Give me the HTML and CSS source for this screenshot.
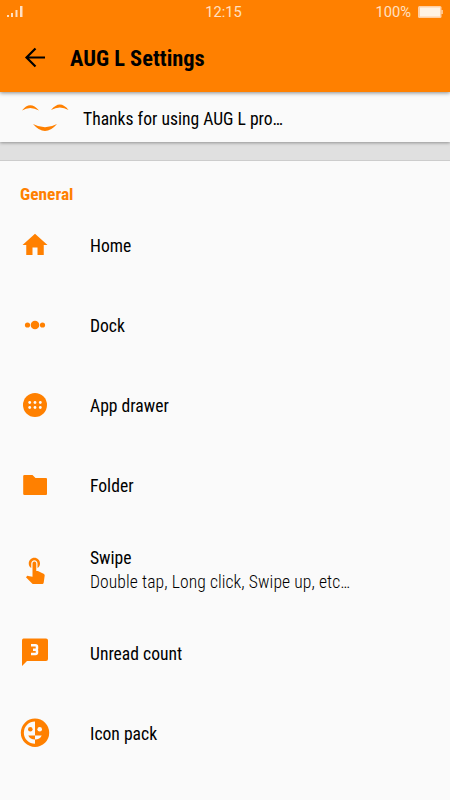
FILE: index.html
```html
<!DOCTYPE html>
<html lang="en">
<head>
    <meta charset="UTF-8">
    <meta name="viewport" content="width=device-width, initial-scale=1.0">
    <title>AUG L Settings</title>
    <link rel="stylesheet" href="styles.css">
</head>
<body>
    <header class="header">
        <div class="status-bar">
            <svg class="signal" width="18" height="13" viewBox="0 0 18 13">
                <path d="M1 10h2v2H1zM5 8h2v4H5zM9.500 5h2v7h-2zM14 1h2.500v11H14z"/>
            </svg>
            <span class="clock">12:15</span>
            <div class="battery">
                <span>100%</span>
                <svg width="25" height="12" viewBox="0 0 25 12">
                    <rect x="0" y="0" width="23.500" height="12" rx="1.500" fill="#ffcfa5"/>
                    <rect x="23.500" y="4" width="1.200" height="4" fill="#ffe0c4"/>
                    <rect x="2" y="1.500" width="20" height="9" fill="#fff3e6"/>
                </svg>
            </div>
        </div>
        <div class="toolbar">
            <svg class="back" width="22" height="22" viewBox="0 0 22 22">
                <path d="M11.500 1.500L2.500 10.500l9 9M2.500 10.500H21"/>
            </svg>
            <h1>AUG L Settings</h1>
        </div>
    </header>

    <div class="banner">
        <svg class="smile" width="48" height="28" viewBox="0 0 48 28">
            <path d="M0 7.500Q8-3 17 7.500Q8 2.500 0 7.500zM29 7Q38-4 46.500 7Q38 2 29 7zM11 21Q23 27.500 35 21Q23 35 11 21z"/>
        </svg>
        <span>Thanks for using AUG L pro…</span>
    </div>

    <main class="settings">
        <h2>General</h2>
        <ul>
            <li>
                <div class="icon">
                    <svg width="30" height="30" viewBox="0 0 24 24"><path d="M10 20v-6h4v6h5v-8h3L12 3 2 12h3v8z"/></svg>
                </div>
                <div class="label">Home</div>
            </li>
            <li>
                <div class="icon">
                    <svg width="30" height="30" viewBox="0 0 30 30">
                        <circle cx="7.500" cy="15" r="2.600"/>
                        <circle cx="15" cy="15" r="4.300"/>
                        <circle cx="22.500" cy="15" r="2.600"/>
                    </svg>
                </div>
                <div class="label">Dock</div>
            </li>
            <li>
                <div class="icon">
                    <svg width="30" height="30" viewBox="0 0 30 30">
                        <circle cx="15" cy="15" r="12"/>
                        <g class="dots">
                            <circle cx="9.700" cy="12.500" r="1.400"/>
                            <circle cx="15" cy="12.500" r="1.400"/>
                            <circle cx="20.300" cy="12.500" r="1.400"/>
                            <circle cx="9.700" cy="17.500" r="1.400"/>
                            <circle cx="15" cy="17.500" r="1.400"/>
                            <circle cx="20.300" cy="17.500" r="1.400"/>
                        </g>
                    </svg>
                </div>
                <div class="label">App drawer</div>
            </li>
            <li>
                <div class="icon">
                    <svg width="30" height="30" viewBox="0 0 30 30"><path d="M4.500 5H12.500l3 3H26q1 0 1 1V24q0 1-1 1H4.500q-1.300 0-1.300-1V6q0-1 1.300-1z"/></svg>
                </div>
                <div class="label">Folder</div>
            </li>
            <li class="two-line">
                <div class="icon">
                    <svg width="30" height="30" viewBox="0 0 24 24"><path d="M9 11.240V7.500C9 6.120 10.120 5 11.500 5S14 6.120 14 7.500v3.740c1.210-.810 2-2.180 2-3.740C16 5.010 13.990 3 11.500 3S7 5.010 7 7.500c0 1.560.790 2.930 2 3.740zm9.840 4.630l-4.540-2.260c-.170-.070-.350-.110-.540-.110H13v-6c0-.830-.670-1.500-1.500-1.500S10 6.670 10 7.500v10.740l-3.430-.720c-.080-.010-.150-.030-.240-.030-.310 0-.590.130-.790.330l-.790.800 4.940 4.940c.270.270.650.440 1.060.440h6.790c.750 0 1.330-.550 1.440-1.280l.750-5.270c.010-.070.020-.140.020-.200 0-.620-.380-1.160-.910-1.380z"/></svg>
                </div>
                <div class="label">Swipe<small>Double tap, Long click, Swipe up, etc…</small></div>
            </li>
            <li>
                <div class="icon">
                    <svg width="32" height="32" viewBox="0 0 32 32">
                        <path d="M4.500 1.500H27q2 0 2 2V22q0 2-2 2H8l-5 5V3.500Q3 1.500 4.500 1.500z"/>
                        <path class="cut" d="M12 8.300h4.500q1.500 0 1.500 1.500v1.400q0 1.500-1.500 1.500H14h2.500q1.500 0 1.500 1.500v1.400q0 1.500-1.500 1.500H12"/>
                    </svg>
                </div>
                <div class="label">Unread count</div>
            </li>
            <li>
                <div class="icon">
                    <svg width="34" height="34" viewBox="0 0 34 34">
                        <circle cx="17" cy="16.700" r="14.200"/>
                        <path class="white" d="M17 5.500a11 11 0 0 0 0 22.300v-4.300c-3.200 0-5.700-1.500-6.700-4H17z"/>
                        <path class="white" d="M17 19.500h6.700c-1 2.500-3.500 4-6.700 4z"/>
                        <circle cx="12.300" cy="13.300" r="2.300"/>
                        <circle class="white" cx="21.700" cy="13.300" r="2.300"/>
                    </svg>
                </div>
                <div class="label">Icon pack</div>
            </li>
        </ul>
    </main>
</body>
</html>
```

FILE: styles.css
```css
* {
    box-sizing: border-box;
}

body {
    margin: 0;
    height: 100vh;
    overflow: hidden;
    display: flex;
    flex-direction: column;
    background-color: #e0e0e0;
    color: #000;
    font-family: 'Roboto Condensed', Roboto, sans-serif;
    font-stretch: 75%;
    font-size: 17.6px;
}

.header {
    height: 92px;
    flex-shrink: 0;
    background-color: #ff8000;
    box-shadow: 0 1px 4px rgba(0, 0, 0, 0.45);
    z-index: 1;
}

.status-bar {
    height: 23px;
    padding: 0 7px 0 6px;
    display: grid;
    grid-template-columns: 1fr auto 1fr;
    align-items: center;
    color: #ffe0c4;
    font-family: Roboto, sans-serif;
    font-stretch: 100%;
    font-size: 14.7px;
}

.signal {
    fill: #ffe0c4;
}

.clock {
    margin-left: -2px;
}

.battery {
    display: flex;
    justify-content: flex-end;
    align-items: center;
    gap: 7px;
}

.toolbar {
    height: 70px;
    padding-left: 24px;
    display: flex;
    align-items: center;
    gap: 24px;
}

.back {
    fill: none;
    stroke: #000;
    stroke-width: 2.2;
}

h1 {
    margin: 0;
    font-size: 22.4px;
    line-height: 26px;
    font-weight: bold;
}

.banner {
    height: 50px;
    flex-shrink: 0;
    padding-left: 22px;
    display: flex;
    align-items: center;
    gap: 13px;
    background-color: #fafafa;
    box-shadow: 0 1px 3px rgba(0, 0, 0, 0.35);
}

.banner span {
    padding-top: 3px;
}

.smile {
    fill: #ff8000;
}

.settings {
    flex: 1;
    margin-top: 18px;
    background-color: #fafafa;
    border-top: 1px solid #ccc;
}

h2 {
    margin: 0;
    padding: 22px 0 0 20px;
    height: 44px;
    line-height: 22px;
    font-size: 17.4px;
    color: #ff8000;
}

ul {
    margin: 0;
    padding: 0;
    list-style: none;
}

li {
    height: 80px;
    padding-left: 15px;
    display: flex;
    align-items: center;
}

.two-line {
    height: 88px;
}

.icon {
    width: 40px;
    margin-right: 35px;
    display: flex;
    justify-content: center;
    fill: #ff8000;
}

.label {
    padding-top: 2px;
    line-height: 24px;
}

.label small {
    display: block;
    font-size: 17.6px;
    font-weight: 300;
    letter-spacing: 0.08px;
    color: #000;
}

.dots,
.white {
    fill: #fafafa;
}

.cut {
    fill: none;
    stroke: #fafafa;
    stroke-width: 2.5;
}
```
